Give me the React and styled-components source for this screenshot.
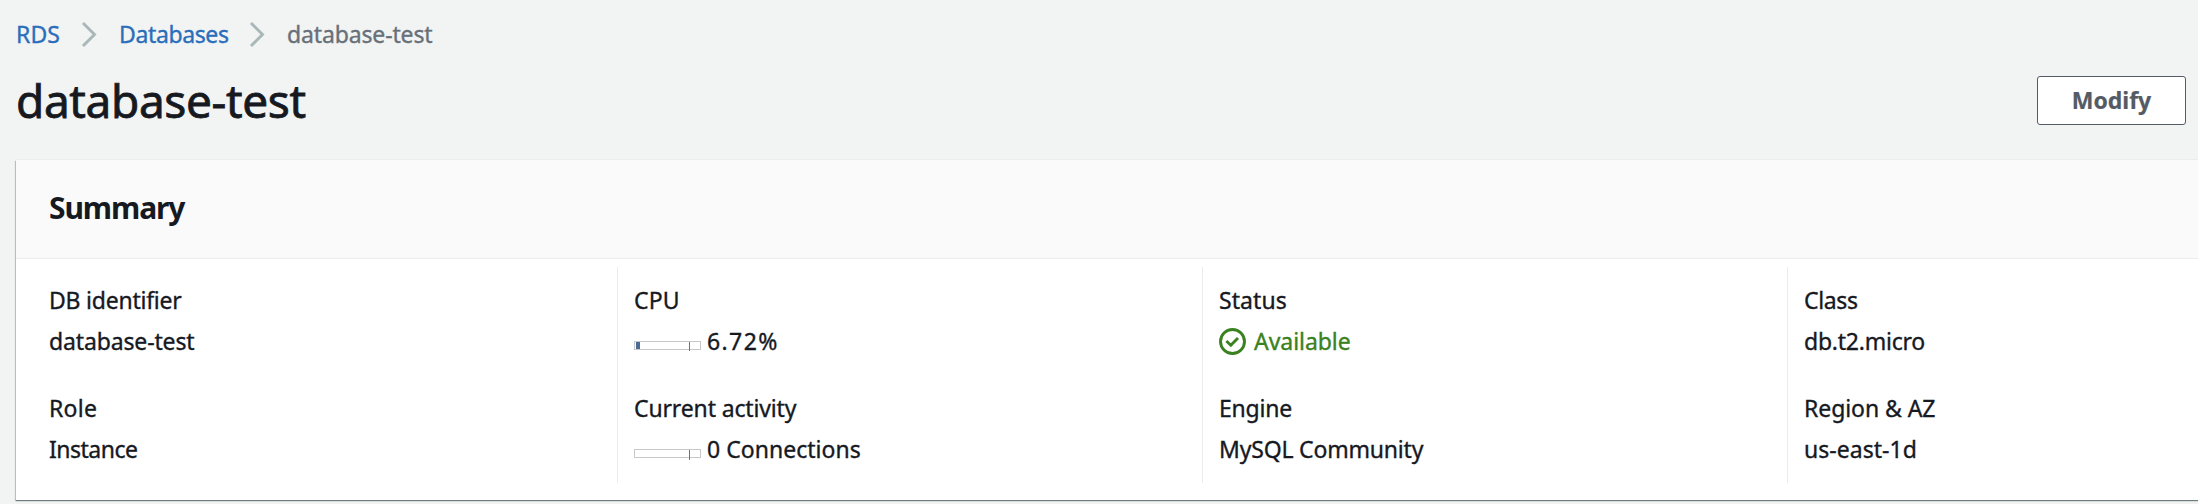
import React from 'react';
import styled, { createGlobalStyle } from 'styled-components';

const GlobalStyle = createGlobalStyle`
  *, *::before, *::after { box-sizing: border-box; }
  html, body { margin: 0; overflow: hidden; background: #f2f3f3; }
  body {
    font-family: "Noto Sans", "Open Sans", sans-serif;
    font-size: 23px;
    line-height: 32px;
    color: #16191f;
    -webkit-text-stroke: 0.35px currentColor;
  }
`;

const Page = styled.main`
  width: 100vw;
  height: 504px;
  overflow: hidden;
  background: #f2f3f3;
`;

const Breadcrumbs = styled.nav`
  display: flex;
  align-items: center;
  height: 50px;
  padding: 18px 0 0 16px;
`;

const Crumb = styled.a`
  flex: none;
  width: ${(p) => p.$width}px;
  color: ${(p) => (p.$current ? '#687078' : '#2a6ebb')};
  letter-spacing: ${(p) => p.$track}px;
  text-decoration: none;
  white-space: nowrap;
`;

const Separator = styled.svg`
  flex: none;
  width: 17px;
  height: 27px;
  margin: 0 21px 0 23px;
  fill: none;
  stroke: #aab7b8;
  stroke-width: 2.9;
`;

const TitleBar = styled.header`
  display: flex;
  align-items: flex-start;
  justify-content: space-between;
  height: 110px;
  padding: 20px 12px 0 16px;
`;

const Title = styled.h1`
  margin: 0;
  font-size: 46px;
  font-weight: 400;
  line-height: 60px;
  letter-spacing: -0.38px;
  -webkit-text-stroke-width: 0.8px;
`;

const Button = styled.button`
  width: 149px;
  height: 49px;
  margin-top: 6px;
  padding: 0 0 1px;
  border: 1px solid #545b64;
  border-radius: 3px;
  background: #fff;
  color: #545b64;
  font: 700 23px/32px "Noto Sans", "Open Sans", sans-serif;
  -webkit-text-stroke: 0.2px #545b64;
`;

const Panel = styled.section`
  width: 2372px;
  height: 340px;
  margin-left: 16px;
  background: #fff;
  box-shadow: 0 1px 1px 0 rgba(0, 28, 36, 0.45), -1px 1px 1px 0 rgba(0, 28, 36, 0.18), 0 -1px 0 0 #eaeded;
`;

const PanelHeader = styled.div`
  height: 99px;
  padding: 28px 33px 0;
  border-bottom: 1px solid #eaeded;
  background: #fafafa;
`;

const PanelTitle = styled.h2`
  margin: 0;
  font-size: 30px;
  font-weight: 700;
  line-height: 40px;
  letter-spacing: -1.1px;
  -webkit-text-stroke-width: 0;
`;

const SummaryGrid = styled.div`
  display: grid;
  grid-template-columns: repeat(4, 585px);
  padding: 8px 16px 0;
`;

const Column = styled.div`
  display: flex;
  flex-direction: column;
  gap: 35px;
  height: 216px;
  padding: 17px 15px 0 16px;
  border-left: 1px solid ${(p) => (p.$divided ? '#eaeded' : 'transparent')};
`;

const Field = styled.dl`
  display: flex;
  flex-direction: column;
  gap: 9px;
  margin: 0;
`;

const Label = styled.dt`
  letter-spacing: ${(p) => p.$track}px;
  white-space: nowrap;
`;

const Value = styled.dd`
  display: flex;
  align-items: center;
  height: 32px;
  margin: 0;
  color: ${(p) => (p.$success ? '#3a8120' : 'inherit')};
  letter-spacing: ${(p) => p.$track}px;
  white-space: nowrap;
`;

const Meter = styled.span`
  position: relative;
  flex: none;
  width: 67px;
  height: 9px;
  margin: 9px 6px 0 0;
  padding: 0 1px;
  border: 1px solid #c8c8c8;
  background: #fff;

  &::after {
    content: '';
    position: absolute;
    top: 0;
    left: 54px;
    width: 1px;
    height: ${(p) => p.$tick}px;
    background: #c4504c;
  }
`;

const MeterFill = styled.span`
  display: block;
  width: 4px;
  height: 7px;
  background: #4a6b93;
`;

const StatusIcon = styled.svg`
  flex: none;
  width: 27px;
  height: 27px;
  margin: 0 8px 0 0;
  fill: none;
  stroke: currentColor;
`;

const columns = [
  [
    { label: 'DB identifier', labelTrack: -0.23, value: 'database-test', track: -0.14 },
    { label: 'Role', labelTrack: 0.28, value: 'Instance', track: -0.5 },
  ],
  [
    { label: 'CPU', labelTrack: 0.12, value: '6.72%', track: 1.4, meter: 'cpu' },
    { label: 'Current activity', labelTrack: -0.14, value: '0 Connections', track: 0.02, meter: 'connections' },
  ],
  [
    { label: 'Status', labelTrack: 0.07, value: 'Available', track: -0.05, success: true },
    { label: 'Engine', labelTrack: -0.2, value: 'MySQL Community', track: -0.19 },
  ],
  [
    { label: 'Class', labelTrack: -0.35, value: 'db.t2.micro', track: -0.23 },
    { label: 'Region & AZ', labelTrack: -0.07, value: 'us-east-1d', track: 0.03 },
  ],
];

function Chevron() {
  return (
    <Separator viewBox="0 0 17 27" aria-hidden="true">
      <path d="M2 2 13.5 13.5 2 25" />
    </Separator>
  );
}

function SummaryField({ item }) {
  return (
    <Field>
      <Label $track={item.labelTrack}>{item.label}</Label>
      <Value $track={item.track} $success={item.success}>
        {item.meter && (
          <Meter $tick={item.meter === 'cpu' ? 9 : 10}>{item.meter === 'cpu' && <MeterFill />}</Meter>
        )}
        {item.success && (
          <StatusIcon viewBox="0 0 27 27" aria-hidden="true">
            <circle cx="13.5" cy="13.5" r="12" strokeWidth="2.9" />
            <path d="M7.4 13 11.8 17.2 19 10" strokeWidth="2.9" />
          </StatusIcon>
        )}
        <span>{item.value}</span>
      </Value>
    </Field>
  );
}

export default function App() {
  return (
    <Page>
      <GlobalStyle />
      <Breadcrumbs>
        <Crumb $width={42} $track={0.1}>RDS</Crumb>
        <Chevron />
        <Crumb $width={107} $track={-0.37}>Databases</Crumb>
        <Chevron />
        <Crumb $width={150} $track={-0.14} $current>database-test</Crumb>
      </Breadcrumbs>
      <TitleBar>
        <Title>database-test</Title>
        <Button type="button">Modify</Button>
      </TitleBar>
      <Panel>
        <PanelHeader>
          <PanelTitle>Summary</PanelTitle>
        </PanelHeader>
        <SummaryGrid>
          {columns.map((fields, i) => (
            <Column key={fields[0].label} $divided={i > 0}>
              {fields.map((item) => (
                <SummaryField key={item.label} item={item} />
              ))}
            </Column>
          ))}
        </SummaryGrid>
      </Panel>
    </Page>
  );
}
